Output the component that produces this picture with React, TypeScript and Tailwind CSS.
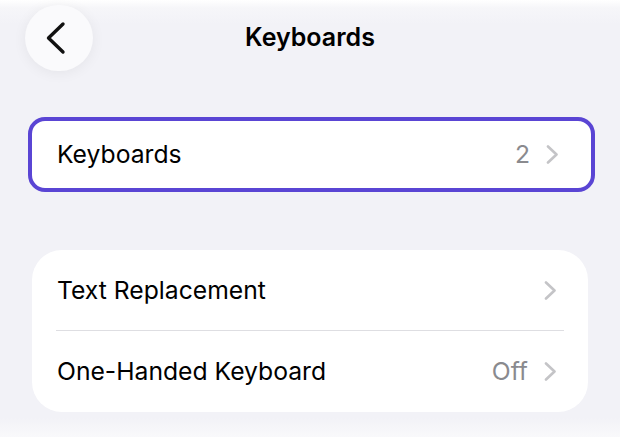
import React from "react";

function ChevronRight() {
  return (
    <svg width="13" height="19" viewBox="0 0 13 19" fill="none" className="shrink-0">
      <path d="M2 1.5 L10.5 9.5 L2 17.5" stroke="#c4c4c7" strokeWidth="2.6" strokeLinecap="round" strokeLinejoin="round" />
    </svg>
  );
}

function Row({ label, value, divider }: { label: string; value?: string; divider?: boolean }) {
  return (
    <div className="relative flex h-[81px] items-center pl-[25px] pr-[31px]">
      <span className="flex-1 text-[24.7px] text-black">{label}</span>
      {value && <span className="mr-[16px] text-[24.7px] text-[#8a8a8e]">{value}</span>}
      <ChevronRight />
      {divider && <div className="absolute bottom-0 left-[24px] right-[24px] h-px bg-[#dedee2]" />}
    </div>
  );
}

export default function App() {
  return (
    <div
      className="h-[437px] w-[620px] overflow-hidden bg-[linear-gradient(to_bottom,#ffffff_0px,#f6f6f9_8px,#f2f2f7_24px,#f2f2f7_418px,#f9f9fb_437px)]"
      style={{ fontFamily: "Inter, 'Noto Sans', sans-serif" }}
    >
      <div className="grid grid-cols-[1fr_auto_1fr] items-center pt-[5px]">
        <div className="pl-[25px]">
          <div className="flex h-[66px] w-[68px] items-center justify-center rounded-full bg-[#fafafc] shadow-[0_2px_14px_rgba(0,0,0,0.06)]">
            <svg width="22" height="34" viewBox="0 0 22 34" fill="none" className="-ml-[6px]">
              <path d="M18 3 L3.5 17 L18 31" stroke="#111" strokeWidth="3.4" strokeLinecap="round" strokeLinejoin="round" />
            </svg>
          </div>
        </div>
        <div className="text-[25px] font-semibold text-black">Keyboards</div>
        <div />
      </div>

      <div className="ml-[28px] mt-[46px] w-[567px] rounded-[17px] border-[4px] border-[#5a45d4] bg-white">
        <div className="flex h-[67px] items-center pl-[25px] pr-[32px]">
          <span className="flex-1 text-[24.7px] text-black">Keyboards</span>
          <span className="mr-[16px] text-[24.7px] text-[#8a8a8e]">2</span>
          <ChevronRight />
        </div>
      </div>

      <div className="ml-[32px] mt-[58px] w-[556px] overflow-hidden rounded-[30px] bg-white">
        <Row label="Text Replacement" divider />
        <Row label="One-Handed Keyboard" value="Off" />
      </div>
    </div>
  );
}
